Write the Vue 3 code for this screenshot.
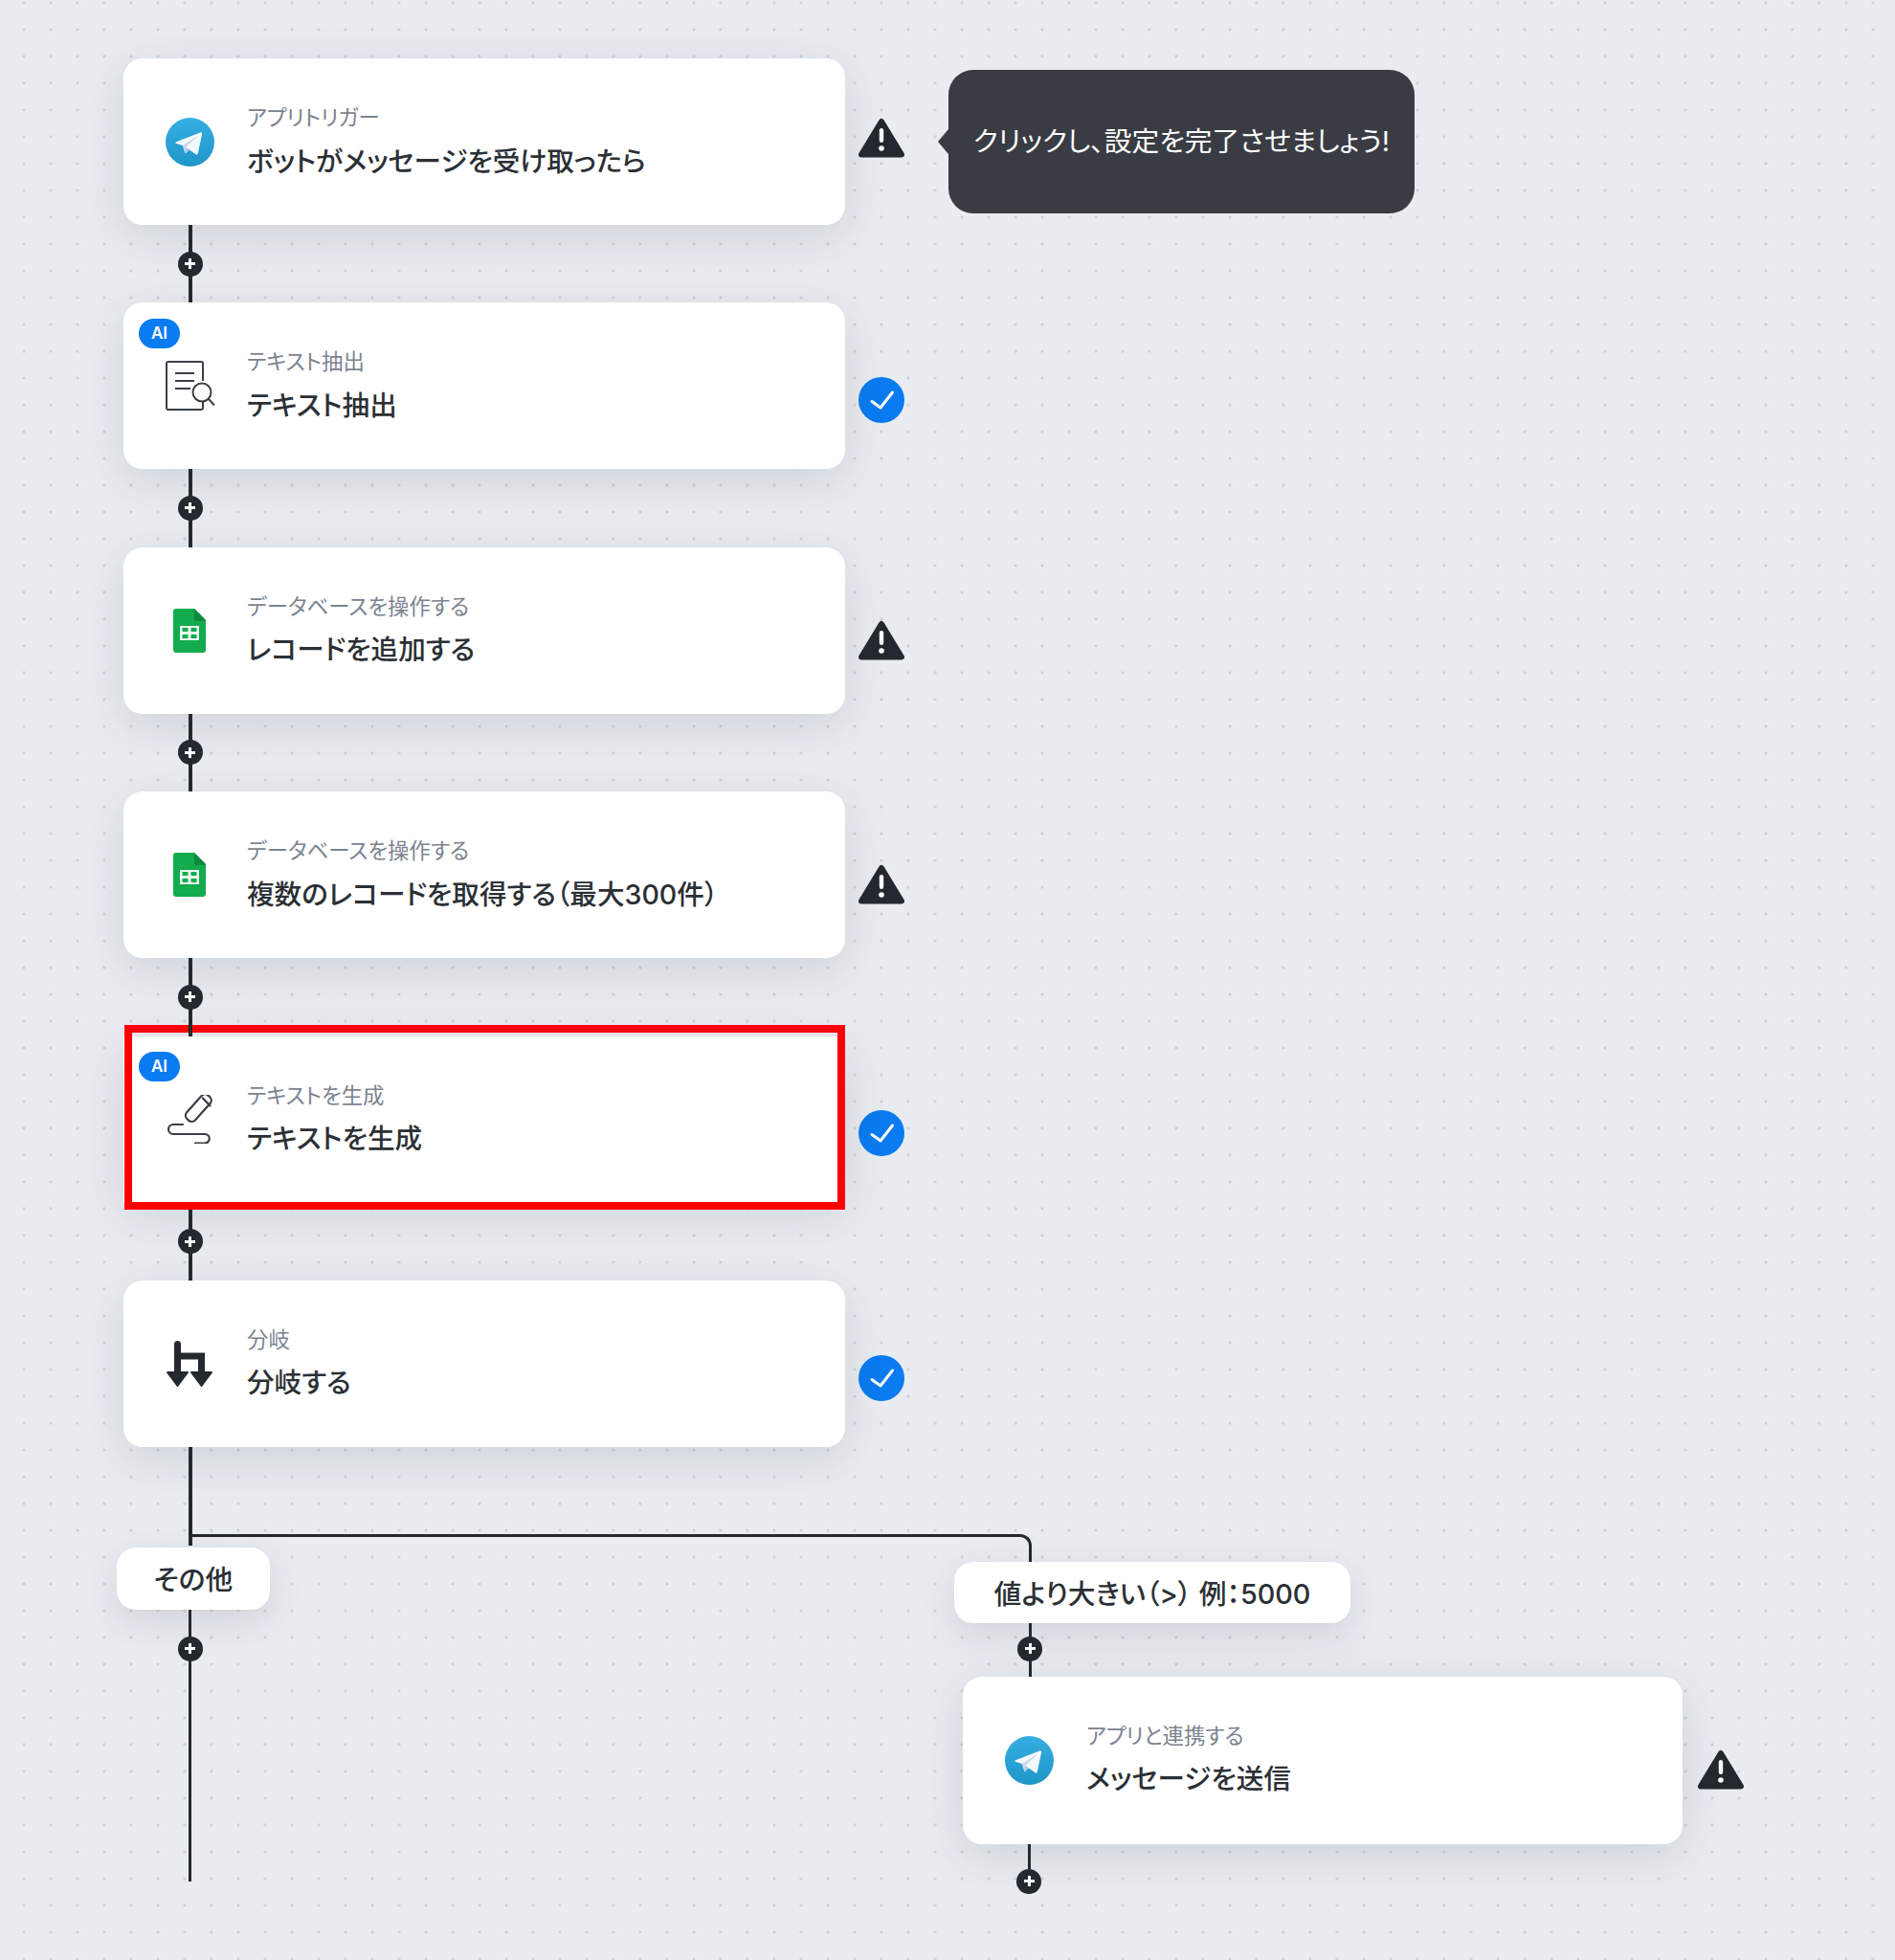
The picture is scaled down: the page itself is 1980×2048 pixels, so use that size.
<script setup>
const steps = [
  { icon: 'telegram', label: 'アプリトリガー', title: 'ボットがメッセージを受け取ったら', status: 'warn', statusTop: 62, tip: 'クリックし、設定を完了させましょう!' },
  { icon: 'doc', ai: true, label: 'テキスト抽出', title: 'テキスト抽出', status: 'ok', statusTop: 78 },
  { icon: 'sheet', label: 'データベースを操作する', title: 'レコードを追加する', status: 'warn', statusTop: 76 },
  { icon: 'sheet', label: 'データベースを操作する', title: '複数のレコードを取得する\uFF08最大300件\uFF09', status: 'warn', statusTop: 76 },
  { icon: 'pen', ai: true, hl: true, label: 'テキストを生成', title: 'テキストを生成', status: 'ok', statusTop: 77 },
  { icon: 'branch', label: '分岐', title: '分岐する', status: 'ok', statusTop: 78 },
]
</script>

<template>
  <div class="canvas">
    <svg width="0" height="0" class="defs">
      <defs>
        <linearGradient id="tg-a" x1="0.5" y1="0" x2="0.5" y2="1">
          <stop offset="0" stop-color="#37aee2" />
          <stop offset="1" stop-color="#1e96c8" />
        </linearGradient>
        <symbol id="i-telegram" viewBox="0 0 240 240">
          <circle cx="120" cy="120" r="120" fill="url(#tg-a)" />
          <path fill="#c8daea" d="M98 175c-3.9 0-3.2-1.5-4.6-5.2L82 132.2 170 80" />
          <path fill="#a9c9dd" d="M98 175c3 0 4.3-1.4 6-3l16-15.6-20-12" />
          <path fill="#f4f9fc" d="M100 144.4l48.4 35.7c5.5 3 9.5 1.5 10.9-5.1L179 82.2c2-8.1-3.1-11.7-8.4-9.3L55 117.5c-7.9 3.2-7.8 7.6-1.4 9.5l29.7 9.3L152 93c3.2-2 6.2-.9 3.8 1.3" />
        </symbol>
        <symbol id="i-doc" viewBox="0 0 52 52">
          <g fill="none" stroke="#3a3f45" stroke-width="2">
            <path d="M39 21V3a2 2 0 0 0-2-2H3a2 2 0 0 0-2 2v46a2 2 0 0 0 2 2h34a2 2 0 0 0 2-2v-6" />
            <path d="M10 13h20M10 21h20M10 29h16" />
            <circle cx="38" cy="33" r="9.5" />
            <path d="M45 40l6 6.5" />
          </g>
        </symbol>
        <symbol id="i-sheet" viewBox="0 0 34 46">
          <path fill="#12ab4e" d="M3 0h19l12 12v31a3 3 0 0 1-3 3H3a3 3 0 0 1-3-3V3a3 3 0 0 1 3-3z" />
          <path fill="#0c8a3c" d="M22 0l12 12v1H24a2 2 0 0 1-2-2z" />
          <path fill="#eef9f2" fill-rule="evenodd" d="M7 18h20v15H7zM9.500 20v4h6v-4zM18.500 20v4h6v-4zM9.500 27v4h6v-4zM18.500 27v4h6v-4z" />
        </symbol>
        <symbol id="i-pen" viewBox="0 0 48 51">
          <g fill="none" stroke="#3a3f45" stroke-width="2.200" stroke-linecap="round">
            <rect x="17" y="8" width="33" height="12" rx="5" transform="rotate(-48 33 14)" />
            <path d="M38 3.500l7.500 8" />
            <path d="M17 31H7a5 5 0 0 0 0 10h33a4.500 4.500 0 0 1 0 9.500H30" />
          </g>
        </symbol>
        <symbol id="i-branch" viewBox="0 0 48 48">
          <path fill="none" stroke="#24292f" stroke-width="7" stroke-linecap="round" d="M11.500 3.500V36" />
          <path fill="none" stroke="#24292f" stroke-width="7" d="M11.500 16H36.500V36" />
          <path fill="#24292f" stroke="#24292f" stroke-width="2" stroke-linejoin="round" d="M1 33h21L11.500 47zM26 33h21L36.500 47z" />
        </symbol>
        <symbol id="i-warn" viewBox="0 0 48 42">
          <path fill="#24292f" stroke="#24292f" stroke-width="6" stroke-linejoin="round" d="M24 4L45 38.500H3z" />
          <rect x="21.800" y="11" width="4.400" height="15" rx="2.200" fill="#fff" />
          <circle cx="24" cy="32" r="2.800" fill="#fff" />
        </symbol>
        <symbol id="i-ok" viewBox="0 0 48 48">
          <circle cx="24" cy="24" r="24" fill="#0a7bf0" />
          <path fill="none" stroke="#fff" stroke-width="3" stroke-linecap="round" stroke-linejoin="round" d="M14 25.500l9 6.500 12.500-16" />
        </symbol>
      </defs>
    </svg>

    <template v-for="(s, i) in steps" :key="i">
      <div class="row">
        <div class="card" :class="{ hl: s.hl }">
          <span v-if="s.ai" class="ai">AI</span>
          <div class="slot">
            <svg :class="['ico', 'ico-' + s.icon]"><use :href="'#i-' + s.icon" /></svg>
          </div>
          <div class="text">
            <div class="label">{{ s.label }}</div>
            <div class="title">{{ s.title }}</div>
          </div>
        </div>
        <svg :class="s.status === 'ok' ? 'st-ok' : 'st-warn'" :style="{ marginTop: s.statusTop + 'px' }">
          <use :href="s.status === 'ok' ? '#i-ok' : '#i-warn'" />
        </svg>
        <div v-if="s.tip" class="tip">{{ s.tip }}</div>
      </div>
      <div v-if="i < steps.length - 1" class="conn" :class="{ 'after-hl': s.hl }">
        <span class="line"></span>
        <span class="plus"></span>
      </div>
    </template>

    <div class="branches">
      <div class="elbow"></div>
      <div class="col-left">
        <div class="stem"></div>
        <div class="pill pill-left">その他</div>
        <div class="tail">
          <span class="plus tail-plus"></span>
        </div>
      </div>
      <div class="col-right">
        <div class="pill pill-right">値より大きい&#xFF08;&gt;&#xFF09; 例&#xFF1A;5000</div>
        <div class="sub-conn">
          <span class="line"></span>
          <span class="plus"></span>
        </div>
        <div class="row last">
          <div class="card wide">
            <div class="slot">
              <svg class="ico ico-telegram"><use href="#i-telegram" /></svg>
            </div>
            <div class="text">
              <div class="label">アプリと連携する</div>
              <div class="title">メッセージを送信</div>
            </div>
          </div>
          <svg class="st-warn last-warn"><use href="#i-warn" /></svg>
        </div>
        <div class="end-conn">
          <span class="line"></span>
          <span class="plus"></span>
        </div>
      </div>
    </div>
  </div>
</template>

<style>
html, body { margin: 0; padding: 0; }
</style>

<style scoped>
.canvas {
  position: relative;
  width: 1980px;
  height: 2048px;
  box-sizing: border-box;
  padding: 61px 0 0 129px;
  overflow: hidden;
  background-color: #e9ecf1;
  background-image: radial-gradient(circle at 14px 14px, #cfd3d9 1.2px, transparent 2px);
  background-size: 28px 28px;
  background-position: 11px -11px;
  font-family: Inter, "Noto Sans CJK JP", "Noto Sans", sans-serif;
  color: #2b3035;
}
.defs { position: absolute; }
.row {
  display: flex;
  align-items: flex-start;
  height: 174px;
}
.card {
  position: relative;
  display: flex;
  align-items: center;
  box-sizing: border-box;
  width: 754px;
  height: 174px;
  padding-left: 18px;
  flex: none;
  background: #fff;
  border-radius: 20px;
  box-shadow: 0 12px 48px rgba(50, 60, 80, 0.15);
}
.card.hl { border-radius: 0; }
.card.hl::after {
  content: "";
  position: absolute;
  left: 1px;
  right: 0;
  top: -11.500px;
  bottom: -7px;
  border: 8.500px solid #ff0000;
  pointer-events: none;
}
.slot {
  display: flex;
  align-items: center;
  justify-content: center;
  flex: none;
  width: 102px;
  margin-right: 9px;
}
.ico { display: block; }
.ico-telegram { width: 51px; height: 51px; }
.ico-doc { width: 52px; height: 52px; margin-left: 2px; }
.ico-sheet { width: 34px; height: 46px; }
.ico-pen { width: 48px; height: 51px; }
.ico-branch { width: 48px; height: 48px; }
.text {
  align-self: flex-start;
  padding-top: 47px;
  font-feature-settings: "palt";
}
.label {
  font-size: 22.400px;
  line-height: 30px;
  color: #7b8390;
}
.title {
  margin-top: 12.500px;
  font-size: 28.600px;
  line-height: 36px;
  font-weight: 500;
  white-space: nowrap;
}
.ai {
  position: absolute;
  left: 16px;
  top: 16.500px;
  width: 43px;
  height: 31px;
  border-radius: 16px;
  background: #0a7bf0;
  color: #fff;
  font-size: 17px;
  font-weight: 600;
  line-height: 31px;
  text-align: center;
}
.st-ok, .st-warn {
  flex: none;
  margin-left: 14px;
}
.st-ok { width: 48px; height: 48px; }
.st-warn { width: 48px; height: 42px; }
.tip {
  position: relative;
  flex: none;
  box-sizing: border-box;
  width: 487px;
  height: 150px;
  margin: 12px 0 0 46px;
  padding-bottom: 6px;
  display: flex;
  align-items: center;
  justify-content: center;
  background: #393c43;
  border-radius: 26px;
  color: #fff;
  font-size: 28.800px;
  font-feature-settings: "palt";
  white-space: nowrap;
}
.tip::before {
  content: "";
  position: absolute;
  left: -11px;
  top: 62px;
  width: 11px;
  height: 26px;
  background: #393c43;
  clip-path: polygon(100% 0, 0 50%, 100% 100%);
}
.conn {
  position: relative;
  z-index: 2;
  height: 81.400px;
  width: 100%;
}
.line {
  position: absolute;
  left: 67.500px;
  top: 0;
  bottom: 0;
  width: 4px;
  background: #24292f;
}
.after-hl .line { top: 7px; }
.plus {
  position: absolute;
  left: 56.500px;
  top: 27.500px;
  width: 26px;
  height: 26px;
  border-radius: 50%;
  background-color: #24292f;
  background-image:
    linear-gradient(#fff, #fff),
    linear-gradient(#fff, #fff);
  background-size: 11px 3px, 3px 11px;
  background-position: center;
  background-repeat: no-repeat;
}
.branches {
  position: relative;
  display: flex;
  align-items: flex-start;
}
.elbow {
  position: absolute;
  left: 69px;
  top: 91px;
  width: 880px;
  height: 29px;
  box-sizing: border-box;
  border-top: 3px solid #24292f;
  border-right: 3px solid #24292f;
  border-top-right-radius: 12px;
}
.col-left {
  flex: none;
  width: 868px;
}
.stem {
  width: 4px;
  height: 103px;
  margin-left: 67.500px;
  background: #24292f;
}
.pill {
  display: flex;
  align-items: center;
  justify-content: center;
  position: relative;
  z-index: 1;
  box-sizing: border-box;
  padding-bottom: 1px;
  background: #fff;
  border-radius: 20px;
  box-shadow: 0 12px 40px rgba(50, 60, 80, 0.14);
  font-size: 28.800px;
  font-weight: 500;
  font-feature-settings: "palt";
  white-space: nowrap;
}
.pill-left {
  width: 160px;
  height: 65px;
  margin: 2px 0 0 -7px;
}
.tail {
  position: relative;
  width: 3px;
  height: 284px;
  margin-left: 68px;
  background: #24292f;
}
.tail-plus {
  left: -11.500px;
  top: 28px;
}
.col-right {
  flex: none;
  padding-top: 120px;
}
.pill-right {
  width: 414px;
  height: 64px;
}
.sub-conn {
  position: relative;
  height: 56px;
}
.sub-conn .line { left: 77.500px; width: 3.500px; }
.sub-conn .plus { left: 66px; top: 14px; }
.last { margin-left: 9px; height: 175px; }
.wide { width: 752px; height: 175px; }
.last-warn { margin: 76px 0 0 16px; }
.end-conn {
  position: relative;
  height: 40px;
}
.end-conn .line { left: 77px; width: 3px; }
.end-conn .plus { left: 65px; top: 26px; }
</style>
